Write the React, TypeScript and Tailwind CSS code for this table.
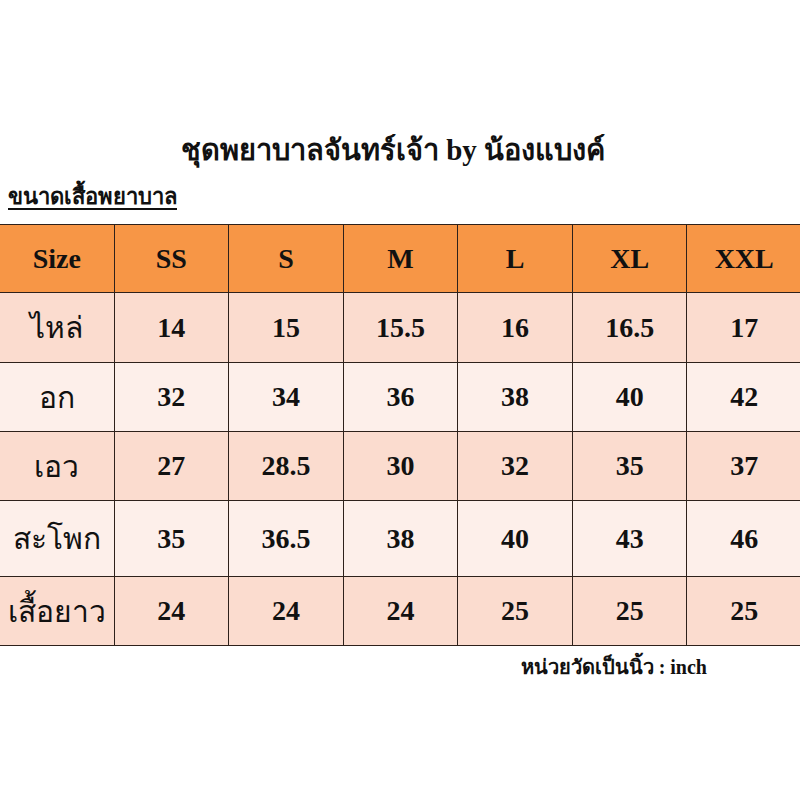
import React from "react";

const headers = ["Size", "SS", "S", "M", "L", "XL", "XXL"];
const rows: { label: string; values: string[]; h: string; bg: string }[] = [
  { label: "ไหล่", values: ["14", "15", "15.5", "16", "16.5", "17"], h: "h-[70px]", bg: "bg-[#fbdccf]" },
  { label: "อก", values: ["32", "34", "36", "38", "40", "42"], h: "h-[69px]", bg: "bg-[#fdefea]" },
  { label: "เอว", values: ["27", "28.5", "30", "32", "35", "37"], h: "h-[69px]", bg: "bg-[#fbdccf]" },
  { label: "สะโพก", values: ["35", "36.5", "38", "40", "43", "46"], h: "h-[76px]", bg: "bg-[#fdefea]" },
  { label: "เสื้อยาว", values: ["24", "24", "24", "25", "25", "25"], h: "h-[69px]", bg: "bg-[#fbdccf]" },
];

const serif = "font-['Liberation_Serif',serif]";

export default function App() {
  return (
    <div className={`w-[800px] h-[800px] bg-white overflow-hidden ${serif} text-[#111]`}>
      <div className="pt-[128px] pr-[14px] text-center text-[29px] leading-[44px] font-semibold">
        ชุดพยาบาลจันทร์เจ้า by น้องแบงค์
      </div>
      <div className="pl-[8px] mt-[10px] text-[22px] leading-[30px] font-bold underline underline-offset-4">
        ขนาดเสื้อพยาบาล
      </div>
      <div className="mt-[12px] w-[802px] border-t border-[#2e211b]">
        <div className="grid grid-cols-7 h-[68px] bg-[#f79646] border-b border-[#2e211b]">
          {headers.map((h) => (
            <div key={h} className="flex items-center justify-center border-r border-[#2e211b] text-[28px] font-bold">
              {h}
            </div>
          ))}
        </div>
        {rows.map((r) => (
          <div key={r.label} className={`grid grid-cols-7 ${r.h} ${r.bg} border-b border-[#2e211b]`}>
            <div className="flex items-center justify-center border-r border-[#2e211b] text-[30px] font-medium">
              {r.label}
            </div>
            {r.values.map((v, i) => (
              <div key={i} className="flex items-center justify-center border-r border-[#2e211b] text-[28px] font-bold">
                {v}
              </div>
            ))}
          </div>
        ))}
      </div>
      <div className="flex justify-end pr-[93px] mt-[6px] text-[20px] leading-[30px] font-bold">
        หน่วยวัดเป็นนิ้ว : inch
      </div>
    </div>
  );
}
